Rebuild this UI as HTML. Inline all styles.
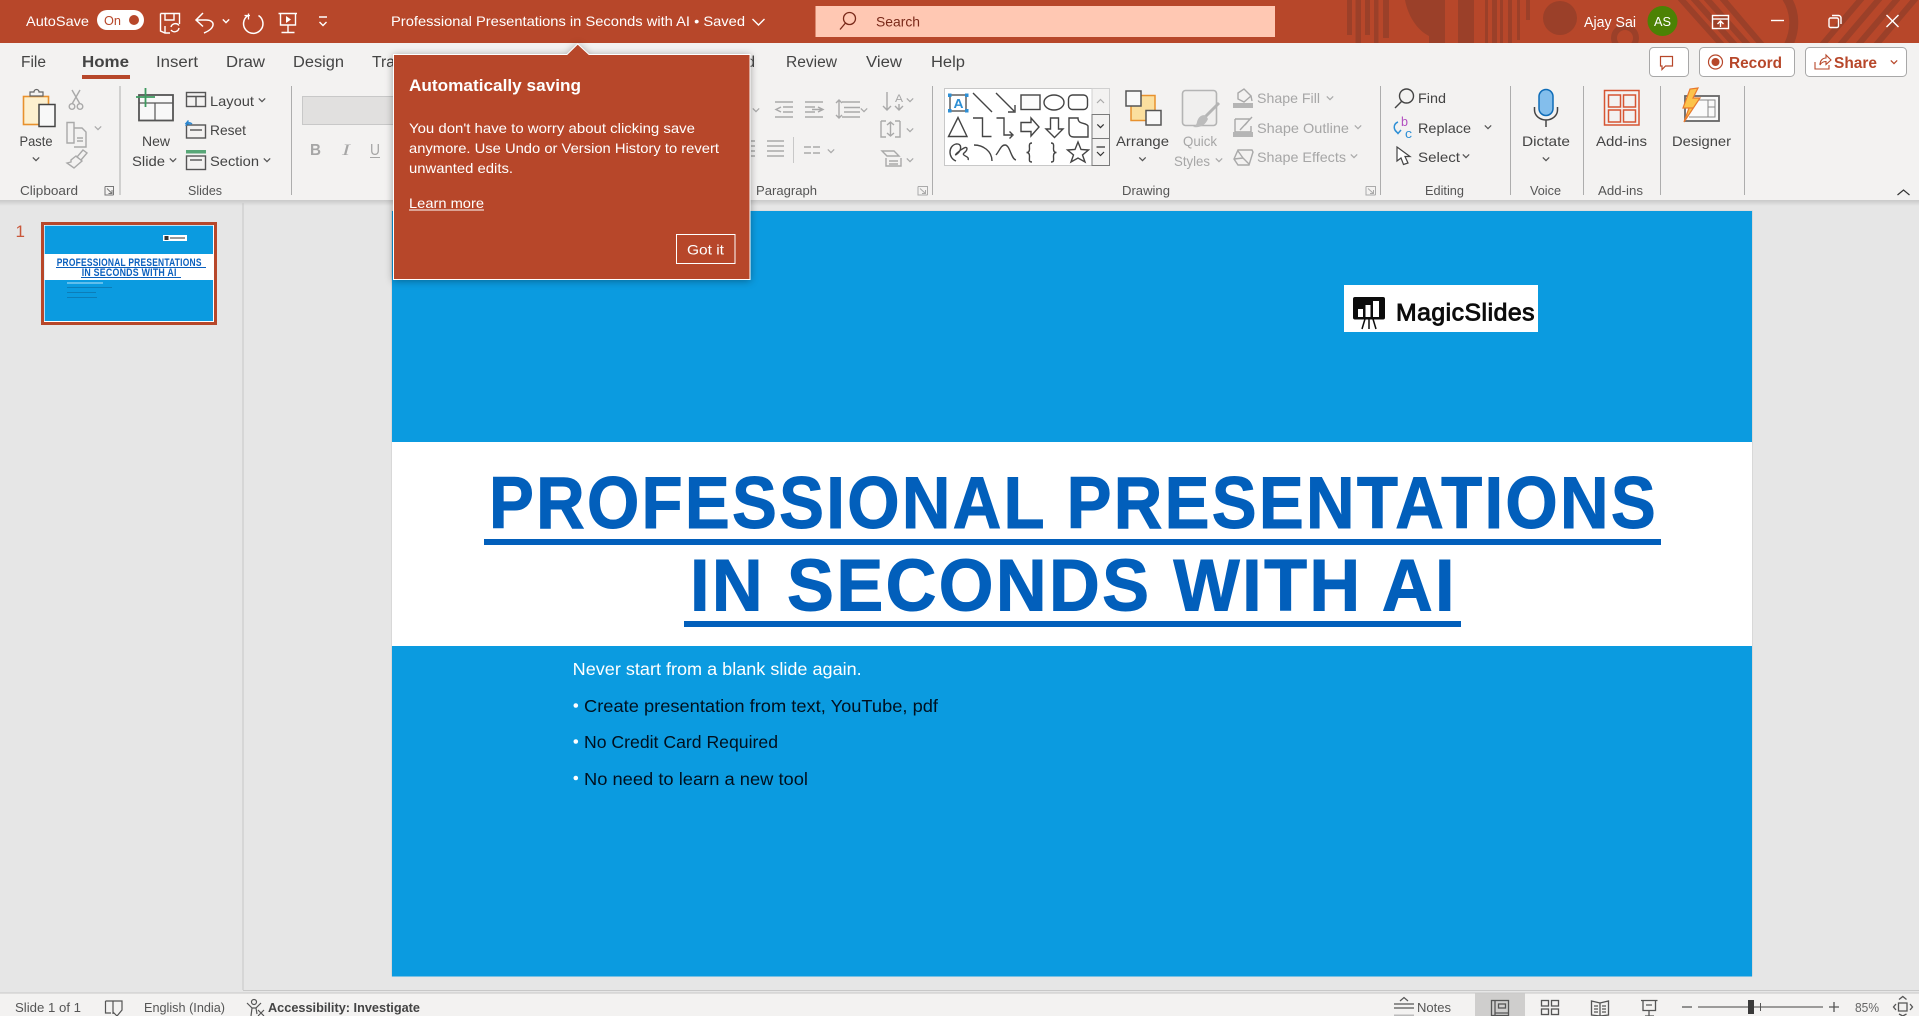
<!DOCTYPE html>
<html lang="en"><head><meta charset="utf-8"><title>Professional Presentations in Seconds with AI - PowerPoint</title>
<style>
html,body{margin:0;padding:0;width:1919px;height:1016px;overflow:hidden;background:#e6e6e6}
svg{display:block}
text{font-family:"Liberation Sans",sans-serif;font-size:14px;fill:#444}
.w{fill:#fff}.g{fill:#a6a6a6}.l{font-size:12.5px;fill:#555}.tab{font-size:15.5px;fill:#444}
.ic{fill:none;stroke:#555;stroke-width:1.4}.dim{fill:none;stroke:#a9a9a9;stroke-width:1.4}
.sh{fill:none;stroke:#444;stroke-width:1.4}.wl{fill:none;stroke:#fff;stroke-width:1.4}
.ch{fill:none;stroke:#555;stroke-width:1.2}.chg{fill:none;stroke:#aaa;stroke-width:1.2}
.bar{fill:#9b4029}.sep{fill:#adadad}
</style></head><body>
<svg xmlns="http://www.w3.org/2000/svg" width="1919" height="1016" viewBox="0 0 1919 1016">
<defs>
<path id="c" d="M-3.2-1.6 0 1.6 3.2-1.6"/>
<linearGradient id="sd" x1="0" y1="0" x2="0" y2="1"><stop offset="0" stop-color="#c9c9c9"/><stop offset="1" stop-color="#e6e6e6"/></linearGradient>
</defs>
<rect width="1919" height="1016" fill="#e6e6e6"/>

<!-- title bar -->
<rect width="1919" height="43" fill="#b7472a"/>
<clipPath id="tb"><rect width="1919" height="43"/></clipPath>
<g clip-path="url(#tb)">
<rect class="bar" x="1347" y="0" width="5" height="35"/><rect class="bar" x="1355.5" y="0" width="5.5" height="43"/><rect class="bar" x="1365" y="0" width="5" height="35"/><rect class="bar" x="1374" y="0" width="4.5" height="43"/><rect class="bar" x="1383" y="0" width="6" height="38"/>
<path class="bar" d="M1405 0H1429V36C1417 30 1408 16 1405 0Z"/>
<rect class="bar" x="1429" width="16" height="43"/><rect class="bar" x="1458" width="16" height="43"/>
<rect class="bar" x="1485" width="3" height="43"/><rect class="bar" x="1492" width="5" height="43"/><rect class="bar" x="1500" width="3" height="43"/><rect class="bar" x="1508" width="4" height="43"/><rect class="bar" x="1517" width="3" height="40"/><rect class="bar" x="1526" width="4" height="20"/>
<circle class="bar" cx="1560" cy="18" r="17"/>
<circle cx="1625" cy="38" r="11" fill="none" stroke="#9b4029" stroke-width="6"/>
<g stroke="#9b4029" stroke-width="6" fill="none">
<path d="M1680-2 1722 45M1693-2 1735 45M1706-2 1748 45M1722-2 1762 45"/>
<path d="M1786-3C1796 12 1796 30 1788 46" stroke-width="9"/>
<path d="M1862-2 1822 45M1880-2 1840 45M1898-2 1858 45M1916-2 1876 45"/>
</g>
</g>
<text class="w" x="26" y="26" textLength="63" lengthAdjust="spacingAndGlyphs">AutoSave</text>
<rect x="97" y="10" width="47" height="20" rx="10" fill="#fff"/>
<text x="104" y="25" style="fill:#b7472a;font-size:12.5px" textLength="17" lengthAdjust="spacingAndGlyphs">On</text>
<circle cx="134" cy="20" r="5" fill="#b7472a"/>
<!-- qat -->
<g class="wl">
<path d="M160.5 13.5H179.5V24M160.5 13.5V31L165 33H170"/><path d="M165 13.5V20H174V13.5M165 33V26"/>
<path d="M171 27A4.5 4.5 0 0 1 179 25.5M179 28A4.5 4.5 0 0 1 171 30"/>
<path d="M203 13 196 20 203 26.5M196 20H206C215.5 20 216 28 204 33" stroke-width="1.5"/>
<path d="M248 15.5A9.7 9.7 0 1 0 258.5 15.5" stroke-width="1.5"/><path d="M248.5 13.5V19.5M244.5 15.5H250" stroke-width="1.3"/>
<path d="M278.5 13.5H297M280.5 13.5V25H295.5V13.5M288 25V32.5M281.5 32.5H294.5"/>
</g>
<path d="M286 16 291 19.5 286 23Z" fill="#fff"/>
<use href="#c" x="226" y="21" class="wl"/>
<path class="wl" d="M319 17H327M319.5 22 323 25.5 326.5 22" stroke-width="1.2"/>
<text class="w" x="391" y="26" textLength="354" lengthAdjust="spacingAndGlyphs">Professional Presentations in Seconds with AI  •  Saved</text>
<path class="wl" d="M752.5 19 758.5 25 764.5 19"/>
<rect x="815.5" y="6" width="459.5" height="31" fill="#ffc8b3"/>
<g fill="none" stroke="#7a2a1a" stroke-width="1.3"><circle cx="849.5" cy="18.5" r="6"/><path d="M845.5 23 840 29.5"/></g>
<text x="876" y="26.5" style="fill:#7a2a1a" textLength="44" lengthAdjust="spacingAndGlyphs">Search</text>
<text class="w" x="1584" y="27" style="font-size:15px" textLength="52" lengthAdjust="spacingAndGlyphs">Ajay Sai</text>
<ellipse cx="1662.5" cy="21" rx="15" ry="15" fill="#4c8204"/>
<text class="w" x="1654" y="26" style="font-size:13px" textLength="17" lengthAdjust="spacingAndGlyphs">AS</text>
<g class="wl"><rect x="1712.5" y="15.5" width="16" height="13"/><path d="M1712.5 19H1728.5" /><path d="M1720.5 27V21M1717.5 24 1720.5 21 1723.5 24"/></g>
<path class="wl" d="M1771 20.5H1784" stroke-width="1.5"/>
<g class="wl"><rect x="1829" y="18" width="9.5" height="9.5" rx="1.5"/><path d="M1832 15.5H1838.5A2.5 2.5 0 0 1 1841 18V24"/></g>
<path class="wl" d="M1886.5 15 1898.5 27M1898.5 15 1886.5 27" stroke-width="1.5"/>

<!-- ribbon -->
<rect y="43" width="1919" height="157" fill="#f3f2f1"/>
<rect y="200" width="1919" height="6" fill="url(#sd)"/>
<text class="tab" x="21" y="67" textLength="25" lengthAdjust="spacingAndGlyphs">File</text>
<text class="tab" x="82" y="67" textLength="47" lengthAdjust="spacingAndGlyphs" style="font-weight:bold">Home</text>
<rect x="82" y="75" width="48" height="4" fill="#b7472a"/>
<text class="tab" x="156" y="67" textLength="42" lengthAdjust="spacingAndGlyphs">Insert</text>
<text class="tab" x="226" y="67" textLength="39" lengthAdjust="spacingAndGlyphs">Draw</text>
<text class="tab" x="293" y="67" textLength="51" lengthAdjust="spacingAndGlyphs">Design</text>
<text class="tab" x="372" y="67" textLength="76" lengthAdjust="spacingAndGlyphs">Transitions</text>
<text class="tab" x="704" y="67" textLength="51" lengthAdjust="spacingAndGlyphs">Record</text>
<text class="tab" x="786" y="67" textLength="51" lengthAdjust="spacingAndGlyphs">Review</text>
<text class="tab" x="866" y="67" textLength="36" lengthAdjust="spacingAndGlyphs">View</text>
<text class="tab" x="931" y="67" textLength="34" lengthAdjust="spacingAndGlyphs">Help</text>

<!-- right buttons -->
<g fill="#fff" stroke="#a8a8a8"><rect x="1649.5" y="47.5" width="39" height="29" rx="4"/><rect x="1699.5" y="47.5" width="95" height="29" rx="4"/><rect x="1805.5" y="47.5" width="101" height="29" rx="4"/></g>
<path d="M1660.5 56.5H1672.5V66H1665.5L1662 69.5V66H1660.5Z" fill="none" stroke="#b7472a" stroke-width="1.2"/>
<circle cx="1715.5" cy="62" r="7" fill="none" stroke="#b7472a" stroke-width="1.2"/><circle cx="1715.5" cy="62" r="4" fill="#b7472a"/>
<text x="1729" y="68" style="fill:#b7472a;font-size:16px;font-weight:bold" textLength="53" lengthAdjust="spacingAndGlyphs">Record</text>
<path d="M1815 62V69H1829V65M1820 65C1820 60 1823 58 1826 58V55L1831 60 1826 64.5V61.5C1823 61.5 1821 63 1820 65Z" fill="none" stroke="#b7472a" stroke-width="1.1"/>
<text x="1834" y="68" style="fill:#b7472a;font-size:16px;font-weight:bold" textLength="43" lengthAdjust="spacingAndGlyphs">Share</text>
<use href="#c" x="1894" y="62" fill="none" stroke="#b7472a" stroke-width="1.2"/>

<!-- separators -->
<g class="sep"><rect x="119.5" y="86" width="1" height="109"/><rect x="291" y="86" width="1" height="109"/><rect x="932" y="86" width="1" height="109"/><rect x="1380" y="86" width="1" height="109"/><rect x="1510" y="86" width="1" height="109"/><rect x="1583" y="86" width="1" height="109"/><rect x="1660" y="86" width="1" height="109"/><rect x="1744" y="86" width="1" height="109"/></g>

<!-- clipboard -->
<rect x="23.5" y="96.5" width="25" height="28" fill="#fdf0cf" stroke="#e8912d" stroke-width="1.6"/>
<path d="M30 96V92H34A2.5 2.5 0 0 1 39 92H43V96Z" fill="#f3f2f1" stroke="#666" stroke-width="1.2"/>
<rect x="39" y="104.5" width="16" height="22" fill="#f8f8f8" stroke="#444" stroke-width="1.5"/>
<text x="19.5" y="146" textLength="33" lengthAdjust="spacingAndGlyphs">Paste</text>
<use href="#c" x="36" y="159" class="ch"/>
<g class="dim" stroke-width="1.2"><path d="M72 90 80 104M80 90 72 104"/><circle cx="72" cy="106.5" r="2.8"/><circle cx="80" cy="106.5" r="2.8"/>
<path d="M67 122.5H74V143H67ZM74 128H82L86 132V147H74"/><path d="M77 138H83M77 141H83"/>
<path d="M83 150 87 153 81 160 77 157ZM76 156 82 161 74 168 67 163 71 162 71 160Z"/></g>
<use href="#c" x="98" y="128" class="chg"/>
<text class="l" x="20" y="195" textLength="58" lengthAdjust="spacingAndGlyphs">Clipboard</text>
<g fill="none" stroke="#777" stroke-width="1"><path d="M105 186.5H113.5V195M105 186.5V195H113.5"/><path d="M107 188.5 112 193.5M112 190V193.5H108.5"/></g>

<!-- slides -->
<rect x="139" y="95" width="34" height="25.5" fill="#f8f8f8" stroke="#555" stroke-width="1.8"/>
<path d="M139 103H173M155 103V120" stroke="#555" fill="none" stroke-width="1.2"/>
<path d="M145.5 88V107M136 97H155" stroke="#3c9a5f" stroke-width="1.8" fill="none"/>
<text x="142" y="146" textLength="28" lengthAdjust="spacingAndGlyphs">New</text>
<text x="132" y="166" textLength="33" lengthAdjust="spacingAndGlyphs">Slide</text>
<use href="#c" x="173" y="160" class="ch"/>
<g class="ic"><rect x="186.5" y="92.5" width="19" height="14"/><path d="M186.5 96.5H205.5M196 96.5V106.5"/>
<rect x="186.5" y="125" width="19" height="13"/><path d="M190 130H202"/>
<rect x="186.5" y="156" width="19" height="13.5"/><path d="M190 160H202"/></g>
<path d="M186 126C186 122 190 122 192 124M188.5 120.5 186 123.5 190.5 124.5" stroke="#2c87d0" fill="none" stroke-width="1.4"/>
<rect x="186" y="150" width="20" height="3.5" fill="#58a777"/>
<text x="210" y="106" textLength="44" lengthAdjust="spacingAndGlyphs">Layout</text><use href="#c" x="262" y="100" class="ch"/>
<text x="210" y="135" textLength="36" lengthAdjust="spacingAndGlyphs">Reset</text>
<text x="210" y="166" textLength="49" lengthAdjust="spacingAndGlyphs">Section</text><use href="#c" x="267" y="160" class="ch"/>
<text class="l" x="188" y="195" textLength="34" lengthAdjust="spacingAndGlyphs">Slides</text>

<!-- font -->
<rect x="302.5" y="96.5" width="120" height="28" fill="#e1e0df" stroke="#c8c8c8"/>
<text class="g" x="310" y="155" style="font-size:16px;font-weight:bold" textLength="11" lengthAdjust="spacingAndGlyphs">B</text>
<text class="g" x="342" y="155" style="font-size:16px;font-style:italic;font-family:'Liberation Serif',serif" textLength="8" lengthAdjust="spacingAndGlyphs">I</text>
<text class="g" x="370" y="155" style="font-size:16px" textLength="10" lengthAdjust="spacingAndGlyphs">U</text>
<rect x="370" y="157" width="10" height="1" fill="#a6a6a6"/>

<!-- paragraph -->
<use href="#c" x="756" y="110" class="chg"/>
<g class="dim">
<path d="M775 102H793M783 107H793M783 112H793M775 117H793M781 107 776 109.5 781 112"/>
<path d="M805 102H823M805 107H815M805 112H815M805 117H823M818 107 823 109.5 818 112M812 109.5H822"/>
<path d="M842 102H860M844 107.5H860M844 112H860M842 117H860M836 103 839 100 842 103M839 100V118M836 115 839 118 842 115"/>
<path d="M887 92V110M883 106 887 110 891 106M899 104V110M895 106 899 110 903 106"/>
<path d="M881 121H886M895 121H900M881 121V137H886M900 121V137H895M890.5 122V136M887 125 890.5 122 894 125M887 133 890.5 136 894 133"/>
<path d="M882 151H894L899 156H887ZM886 158V166H901V158M889 161H898M889 164H898"/>
<path d="M767 141H784M767 146H784M767 151H784M767 156H784M751 141H755M751 146H755M751 151H755M751 156H755"/>
<path d="M804 147H811M813 147H820M804 153H811M813 153H820"/>
</g>
<rect x="793" y="137" width="1" height="26" fill="#c8c8c8"/>
<text class="g" x="895" y="102" style="font-size:11px" textLength="8" lengthAdjust="spacingAndGlyphs">A</text>
<use href="#c" x="864" y="110" class="chg"/><use href="#c" x="910" y="100" class="chg"/><use href="#c" x="910" y="130" class="chg"/><use href="#c" x="910" y="160" class="chg"/><use href="#c" x="831" y="151" class="chg"/>
<text class="l" x="756" y="195" textLength="61" lengthAdjust="spacingAndGlyphs">Paragraph</text>
<g fill="none" stroke="#aaa" stroke-width="1"><path d="M918 186.5H927.5V195M918 186.5V195H927.5"/><path d="M920 188.5 925.5 193.5M925.5 190V193.5H922"/></g>

<!-- shapes gallery -->
<rect x="944.5" y="88.5" width="165" height="77" fill="#fff" stroke="#c8c8c8"/>
<rect x="1092" y="88.5" width="17.5" height="26" fill="#f3f2f1" stroke="#d0d0d0"/>
<rect x="1092" y="114.5" width="17.5" height="24" fill="#f3f2f1" stroke="#7a7a7a"/>
<rect x="1092" y="138.5" width="17.5" height="27" fill="#f3f2f1" stroke="#7a7a7a"/>
<path d="M1097 103 1100.5 99.5 1104 103" class="chg"/>
<use href="#c" x="1100.5" y="126" class="ch" style="stroke:#333"/>
<path d="M1096.5 147H1105M1097 152 1100.5 155.5 1104 152" class="ch" style="stroke:#333"/>
<g class="sh">
<rect x="950" y="95" width="16" height="16" stroke="#555"/>
<path d="M973 93 992 112M996 93 1014 111M1008 112H1015V105"/>
<rect x="1021" y="95" width="19" height="14.5" fill="#fbfbfb"/>
<ellipse cx="1054" cy="102.5" rx="10" ry="7.5"/><rect x="1068.5" y="95" width="19" height="14.5" rx="4"/>
<path d="M958 117.5 948.5 136.5H967ZM973 118H982.5V136.5H991.5M996.5 118H1004V135H1012M1009.5 131.5 1013 135 1009.5 138.5"/>
<path d="M1021 122.5H1031V118L1039 127 1031 136V131.5H1021Z"/>
<path d="M1050.5 118H1058.5V129H1063L1054.5 137.5 1046 129H1050.5Z"/>
<path d="M1069 118H1078C1078 125 1086 122 1088 126V137H1074C1070 137 1069 135 1069 132Z"/>
<path d="M956 161C948 158 948 146 956 144C962 143 962 150 957 154C953 157 958 151 964 148C968 146 968 150 964 153C961 156 970 156 968 160"/>
<path d="M974 145C983 145 992 151 992 161"/>
<path d="M996 155C1000 150 1001 145 1005 145C1010 145 1011 159 1016 160"/>
<path d="M1032 143C1028.5 143 1029.5 146 1029.5 149C1029.5 151.5 1028.5 152.5 1026.5 152.5C1028.5 152.5 1029.5 153.5 1029.5 156C1029.5 160 1028.5 162 1032 162"/>
<path d="M1051 143C1054.5 143 1053.5 146 1053.5 149C1053.5 151.5 1054.5 152.5 1056.5 152.5C1054.5 152.5 1053.5 153.5 1053.5 156C1053.5 160 1054.5 162 1051 162"/>
<path d="M1078 142 1081 149.5 1088.5 150 1082.5 155 1085 162 1078 158 1071 162 1073.5 155 1067.5 150 1075 149.5Z"/>
</g>
<g fill="#2d8fd5"><rect x="948" y="93.5" width="3.5" height="3.5"/><rect x="965" y="93.5" width="3.5" height="3.5"/><rect x="948" y="109" width="3.5" height="3.5"/><rect x="965" y="109" width="3.5" height="3.5"/></g>
<text x="953.5" y="108" style="fill:#2d8fd5;font-size:13px;font-weight:bold" textLength="10" lengthAdjust="spacingAndGlyphs">A</text>

<!-- arrange -->
<rect x="1131" y="95.5" width="24" height="25" fill="#fbdf9e" stroke="#e8912d" stroke-width="1.5"/>
<rect x="1126" y="91" width="15" height="15" fill="#f8f8f8" stroke="#555" stroke-width="1.5"/>
<rect x="1146" y="110.5" width="15" height="14.5" fill="#f8f8f8" stroke="#555" stroke-width="1.5"/>
<text x="1116" y="146" textLength="53" lengthAdjust="spacingAndGlyphs">Arrange</text>
<use href="#c" x="1142.5" y="159" class="ch"/>
<rect x="1182.5" y="90.5" width="34" height="35" rx="3" fill="#f0efee" stroke="#b4b4b4" stroke-width="1.6"/>
<path d="M1219 103 1205 117" stroke="#b4b4b4" stroke-width="3" fill="none"/>
<path d="M1206 115.5C1201 114 1198 118 1197 122C1196.5 125 1195 126 1193 127C1199 128 1205 126 1208 119Z" fill="#bcbcbc"/>
<text class="g" x="1183" y="146" textLength="34" lengthAdjust="spacingAndGlyphs">Quick</text>
<text class="g" x="1174" y="166" textLength="36" lengthAdjust="spacingAndGlyphs">Styles</text>
<use href="#c" x="1219" y="160" class="chg"/>
<g class="dim"><path d="M1238 93 1244 89 1251 96 1244 102 1238 99ZM1247 92 1251 96 1252 101"/>
<path d="M1235 119H1250L1245 125M1235 119V132H1251V126M1240 130 1252 117"/>
<path d="M1234 159 1238 150H1252L1253 152 1249 165H1238ZM1238 151 1243 158 1234 159M1243 158 1249 164"/></g>
<rect x="1233" y="103" width="20" height="5" fill="#b5b5b5"/><rect x="1233" y="132" width="20" height="5" fill="#b5b5b5"/>
<text class="g" x="1257" y="103" textLength="63" lengthAdjust="spacingAndGlyphs">Shape Fill</text><use href="#c" x="1330" y="98" class="chg"/>
<text class="g" x="1257" y="133" textLength="92" lengthAdjust="spacingAndGlyphs">Shape Outline</text><use href="#c" x="1358" y="127" class="chg"/>
<text class="g" x="1257" y="162" textLength="89" lengthAdjust="spacingAndGlyphs">Shape Effects</text><use href="#c" x="1354" y="156" class="chg"/>
<text class="l" x="1122" y="195" textLength="48" lengthAdjust="spacingAndGlyphs">Drawing</text>
<g fill="none" stroke="#aaa" stroke-width="1"><path d="M1366 186.5H1375.5V195M1366 186.5V195H1375.5"/><path d="M1368 188.5 1373.5 193.5M1373.5 190V193.5H1370"/></g>

<!-- editing -->
<g class="ic" style="stroke:#444"><circle cx="1406.5" cy="96" r="7"/><path d="M1401.5 101.5 1395 108"/></g>
<text x="1418" y="103" textLength="28" lengthAdjust="spacingAndGlyphs">Find</text>
<text x="1401" y="126" style="fill:#b24fc0;font-size:13px" textLength="7" lengthAdjust="spacingAndGlyphs">b</text>
<text x="1405" y="138" style="fill:#2d8fd5;font-size:13px" textLength="7" lengthAdjust="spacingAndGlyphs">c</text>
<path d="M1398 122C1393 124 1393 130 1398 133M1395 130 1398 133.5 1401 130" fill="none" stroke="#2d8fd5" stroke-width="1.5"/>
<text x="1418" y="133" textLength="53" lengthAdjust="spacingAndGlyphs">Replace</text><use href="#c" x="1488" y="127" class="ch"/>
<path d="M1397 147V161L1401 158 1403.5 164.5 1408 163 1405 156.5 1410 156.5Z" fill="#fff" stroke="#444" stroke-width="1.2"/>
<text x="1418" y="162" textLength="42" lengthAdjust="spacingAndGlyphs">Select</text><use href="#c" x="1466" y="156" class="ch"/>
<text class="l" x="1425" y="195" textLength="39" lengthAdjust="spacingAndGlyphs">Editing</text>

<!-- voice -->
<rect x="1539" y="89.5" width="14" height="26" rx="7" fill="#83beec" stroke="#0e6cb8" stroke-width="1.5"/>
<path d="M1534.5 107V110A11.5 10 0 0 0 1557.5 110V107M1546 120V127" fill="none" stroke="#444" stroke-width="1.5"/>
<text x="1522" y="146" textLength="48" lengthAdjust="spacingAndGlyphs">Dictate</text>
<use href="#c" x="1546" y="159" class="ch"/>
<text class="l" x="1530" y="195" textLength="31" lengthAdjust="spacingAndGlyphs">Voice</text>

<!-- add-ins -->
<g fill="none" stroke="#d65532" stroke-width="1.5"><rect x="1604.5" y="90.5" width="34.5" height="34.5"/><rect x="1608.5" y="95" width="12" height="12"/><rect x="1623.5" y="95" width="12" height="12"/><rect x="1608.5" y="110" width="12" height="12"/><rect x="1623.5" y="110" width="12" height="12"/></g>
<text x="1596" y="146" textLength="51" lengthAdjust="spacingAndGlyphs">Add-ins</text>
<text class="l" x="1598" y="195" textLength="45" lengthAdjust="spacingAndGlyphs">Add-ins</text>

<!-- designer -->
<rect x="1685" y="96" width="34" height="25" fill="#fafafa" stroke="#666" stroke-width="1.8"/>
<path d="M1689 100H1715V117H1689M1708 100V117M1708 107H1715" fill="none" stroke="#888"/>
<path d="M1693 108 1683 108 1690 89 1698 88 1693 98H1700L1684 122 1689 108Z" fill="#fcc34a" stroke="#e8792d" stroke-width="1.2"/>
<text x="1672" y="146" textLength="59" lengthAdjust="spacingAndGlyphs">Designer</text>
<path d="M1897.5 195 1903.5 190 1909.5 195" class="ch" style="stroke:#333"/>

<!-- panes -->
<rect x="242.5" y="203" width="1" height="787" fill="#c6c6c6"/>
<rect x="0" y="992.5" width="1919" height="1" fill="#c8c8c8"/>
<rect x="243" y="990" width="1676" height="1" fill="#c8c8c8"/>

<!-- thumbnail -->
<text x="15.5" y="237" style="fill:#c9573a;font-size:17px">1</text>
<rect x="41" y="222" width="176" height="103" fill="#b7472a"/>
<rect x="44" y="225" width="170" height="97" fill="#fff"/>
<rect x="44.7" y="225.7" width="168.3" height="95.3" fill="#0b9be0"/>
<rect x="44.7" y="254" width="168.3" height="26" fill="#fff"/>
<rect x="163" y="235" width="24" height="6" fill="#fff"/><rect x="164.5" y="236" width="4" height="4" fill="#333"/><rect x="170" y="237" width="15" height="2" fill="#999"/>
<text x="56.7" y="266" style="fill:#0a5fbd;font-size:11px;font-weight:bold;letter-spacing:.3px" textLength="145" lengthAdjust="spacingAndGlyphs">PROFESSIONAL PRESENTATIONS</text>
<text x="81.7" y="276" style="fill:#0a5fbd;font-size:11px;font-weight:bold;letter-spacing:.3px" textLength="95" lengthAdjust="spacingAndGlyphs">IN SECONDS WITH AI</text>
<rect x="56" y="267" width="150" height="1" fill="#0a5fbd"/><rect x="81" y="277" width="100" height="1" fill="#0a5fbd"/>
<rect x="67" y="282.5" width="36" height="1" fill="#b5e2f8"/>
<rect x="67" y="287" width="45" height="1" fill="#0c7db8"/><rect x="67" y="292" width="29" height="1" fill="#0c7db8"/><rect x="67" y="297" width="30" height="1" fill="#0c7db8"/>

<!-- slide -->
<rect x="391" y="210.5" width="1362" height="766" fill="#d8d8d8"/>
<rect x="392" y="211" width="1360" height="765.5" fill="#0b9be0"/>
<rect x="392" y="442" width="1360" height="204" fill="#fff"/>
<rect x="1344" y="285" width="194" height="47" fill="#fff"/>
<rect x="1353" y="297" width="32" height="22.5" rx="2" fill="#0c0c0c"/>
<rect x="1358" y="309" width="5" height="8" fill="#fff"/><rect x="1365.5" y="305" width="5" height="12" fill="#fff"/><rect x="1373" y="301" width="6" height="16" fill="#fff"/>
<path d="M1365 319 1362 329M1369 319V329M1373 319 1376 329" stroke="#0c0c0c" stroke-width="1.5" fill="none"/>
<text x="1396" y="320.5" style="fill:#0c0c0c;font-size:24.5px;stroke:#0c0c0c;stroke-width:.9;letter-spacing:.5px" textLength="139" lengthAdjust="spacingAndGlyphs">MagicSlides</text>
<text x="489" y="528" style="fill:#025fbb;stroke:#025fbb;stroke-width:1;font-size:73px;font-weight:bold;letter-spacing:2.5px" textLength="1169" lengthAdjust="spacingAndGlyphs">PROFESSIONAL PRESENTATIONS</text>
<rect x="484" y="539" width="1177" height="6" fill="#025fbb"/>
<text x="690" y="610.5" style="fill:#025fbb;stroke:#025fbb;stroke-width:1;font-size:73px;font-weight:bold;letter-spacing:2.5px" textLength="767" lengthAdjust="spacingAndGlyphs">IN SECONDS WITH AI</text>
<rect x="684" y="621" width="777" height="6" fill="#025fbb"/>
<text class="w" x="572.7" y="675" style="font-size:17.5px" textLength="289" lengthAdjust="spacingAndGlyphs">Never start from a blank slide again.</text>
<circle cx="575.8" cy="705.5" r="2.3" fill="#fff"/><circle cx="575.8" cy="741.5" r="2.3" fill="#fff"/><circle cx="575.8" cy="778" r="2.3" fill="#fff"/>
<text x="584" y="712" style="fill:#00101f;font-size:17.5px" textLength="354" lengthAdjust="spacingAndGlyphs">Create presentation from text, YouTube, pdf</text>
<text x="584" y="748" style="fill:#00101f;font-size:17.5px" textLength="194" lengthAdjust="spacingAndGlyphs">No Credit Card Required</text>
<text x="584" y="785" style="fill:#00101f;font-size:17.5px" textLength="224" lengthAdjust="spacingAndGlyphs">No need to learn a new tool</text>

<!-- popup -->
<g style="filter:drop-shadow(0 1px 4px rgba(0,0,0,.35))">
<path d="M393.5 54.5H567L577.7 44 589 54.5H750V279.5H393.5Z" fill="#b7472a" stroke="#fff" stroke-width="1"/>
</g>
<rect x="568" y="55" width="20" height="2" fill="#b7472a"/>
<text class="w" x="409" y="91" style="font-size:16.5px;font-weight:bold" textLength="172" lengthAdjust="spacingAndGlyphs">Automatically saving</text>
<text class="w" x="409" y="133" textLength="286" lengthAdjust="spacingAndGlyphs">You don't have to worry about clicking save</text>
<text class="w" x="409" y="153" textLength="310" lengthAdjust="spacingAndGlyphs">anymore. Use Undo or Version History to revert</text>
<text class="w" x="409" y="173" textLength="104" lengthAdjust="spacingAndGlyphs">unwanted edits.</text>
<text class="w" x="409" y="208" textLength="75" lengthAdjust="spacingAndGlyphs">Learn more</text>
<rect x="409" y="209.5" width="75" height="1" fill="#fff"/>
<rect x="676.5" y="234.5" width="58.5" height="29" fill="none" stroke="#fff"/>
<text class="w" x="687" y="254.5" textLength="37" lengthAdjust="spacingAndGlyphs">Got it</text>

<!-- status bar -->
<rect y="993.5" width="1919" height="22.5" fill="#f3f2f1"/>
<text x="15" y="1012" style="font-size:12.5px;fill:#555" textLength="66" lengthAdjust="spacingAndGlyphs">Slide 1 of 1</text>
<text x="144" y="1012" style="font-size:12.5px;fill:#555" textLength="81" lengthAdjust="spacingAndGlyphs">English (India)</text>
<text x="268" y="1012" style="font-size:12.5px;fill:#444;font-weight:bold" textLength="152" lengthAdjust="spacingAndGlyphs">Accessibility: Investigate</text>
<text x="1417" y="1012" style="font-size:13px;fill:#555" textLength="34" lengthAdjust="spacingAndGlyphs">Notes</text>
<text x="1855" y="1012" style="font-size:12.5px;fill:#666" textLength="24" lengthAdjust="spacingAndGlyphs">85%</text>
<path d="M105.5 1001H113V1014M113 1001H122V1010L117 1016 113 1012M105.5 1001V1013H111" fill="none" stroke="#555" stroke-width="1.2"/>
<g fill="none" stroke="#555" stroke-width="1.2"><circle cx="254" cy="1002" r="2.5"/><path d="M247 1003 252 1008 251 1016M261 1003 256 1008 257 1014M252 1008H256M258 1010 264 1016M264 1010 258 1016"/></g>
<path d="M1400 1001 1404 997.5 1408 1001M1394 1004H1414M1394 1008H1414" fill="none" stroke="#555" stroke-width="1.2"/><rect x="1394" y="1014.5" width="20" height="1.5" fill="#bbb"/>
<rect x="1475" y="993.5" width="50" height="22.5" fill="#cfcecd"/>
<g fill="none" stroke="#555" stroke-width="1.3">
<rect x="1491.5" y="1000.5" width="17" height="15"/><path d="M1495 1000.5V1015.5M1495 1013H1508.5"/><rect x="1498.5" y="1004" width="7" height="4"/>
<rect x="1541.5" y="1000.5" width="7" height="5.5"/><rect x="1551.5" y="1000.5" width="7" height="5.5"/><rect x="1541.5" y="1009" width="7" height="5.5"/><rect x="1551.5" y="1009" width="7" height="5.5"/>
<path d="M1591.5 1001 1600 1003 1608.5 1001V1015L1600 1016 1591.5 1015ZM1600 1003V1016M1594 1006H1598M1594 1009H1598M1594 1012H1598M1602 1006H1606M1602 1009H1606M1602 1012H1606"/>
<path d="M1641 1000.5H1657.5M1643 1000.5V1010.5H1655.5V1000.5M1649 1010.5V1016M1645 1016H1654M1646 1005H1652"/>
<path d="M1682 1007H1692M1829 1007H1839M1834 1002V1012"/>
<path d="M1898.5 1003H1907V1011H1898.5ZM1899 999.5 1902.8 996.5 1906.5 999.5M1899 1014 1902.8 1016 1906.5 1014M1896 1004 1893.5 1007 1896 1010M1910 1004 1912.5 1007 1910 1010"/>
</g>
<rect x="1698" y="1006.5" width="125" height="1" fill="#444"/><rect x="1760" y="1003" width="1" height="8" fill="#555"/>
<rect x="1748" y="1000" width="6" height="14" fill="#3a3a3a"/>
</svg>
</body></html>
